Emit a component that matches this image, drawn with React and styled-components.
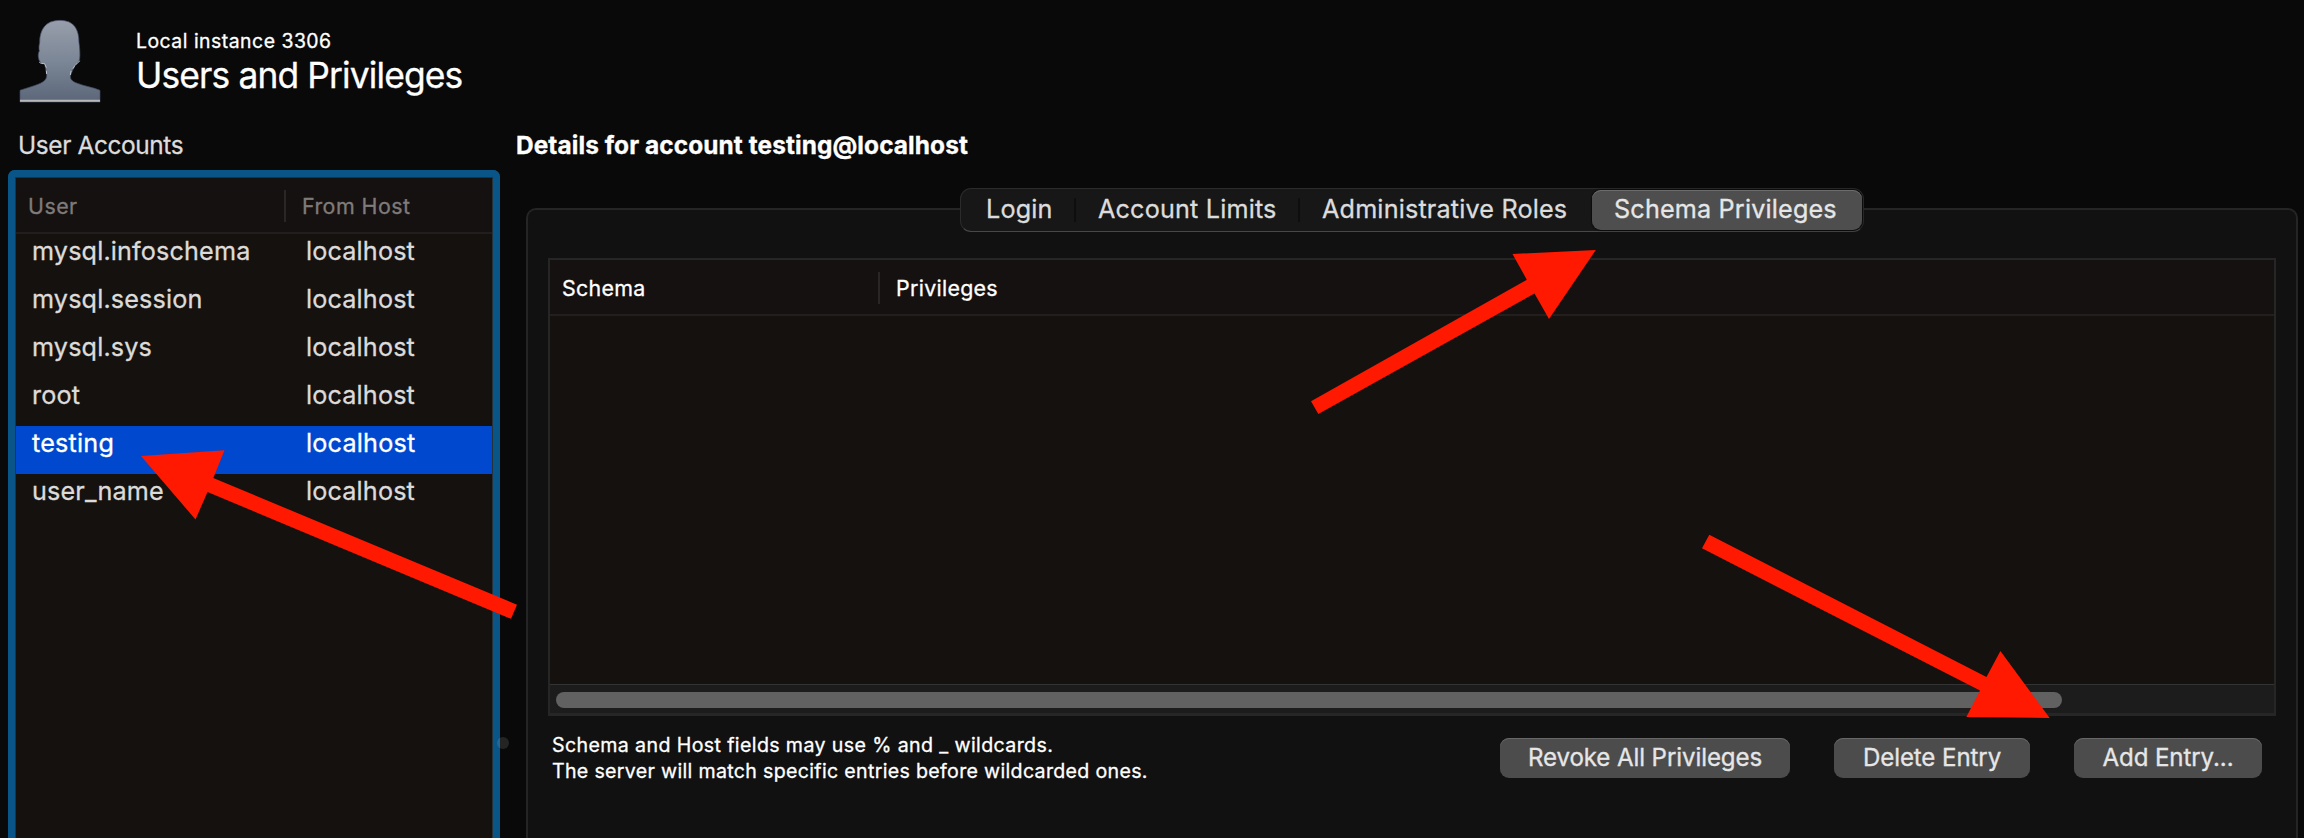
import React from "react";
import styled, { createGlobalStyle, css } from "styled-components";

const GlobalStyle = createGlobalStyle`
  * { box-sizing: border-box; }
  html, body { margin: 0; padding: 0; background: #090909; }
  body {
    overflow: hidden;
    font-family: Inter, "Liberation Sans", sans-serif;
    color: #fff;
    -webkit-text-stroke: 0.3px currentColor;
  }
`;

const Window = styled.div`
  position: relative;
  display: flex;
  flex-direction: column;
  width: 2304px;
  height: 838px;
  overflow: hidden;
  background: #090909;
`;

/* ---------- header ---------- */

const Header = styled.header`
  display: flex;
  flex: none;
  height: 131px;
  padding: 18px 0 0 18px;
`;

const Avatar = styled.svg`
  flex: none;
  width: 84px;
  height: 86px;
`;

const Titles = styled.div`
  padding: 9px 0 0 34px;
  white-space: nowrap;
`;

const Connection = styled.div`
  font-size: 19.4px;
  line-height: 28px;
  letter-spacing: 0.5px;
`;

const PageTitle = styled.h1`
  margin: 0;
  font-size: 35.4px;
  font-weight: 400;
  line-height: 42px;
  letter-spacing: -0.87px;
`;

/* ---------- columns ---------- */

const Columns = styled.main`
  display: flex;
  flex: 1;
  min-height: 0;
`;

const Sidebar = styled.section`
  display: flex;
  flex-direction: column;
  flex: none;
  width: 500px;
  padding-left: 8px;
`;

const SectionLabel = styled.h2`
  flex: none;
  margin: 0;
  height: 39px;
  padding-left: ${(p) => p.$indent || 0}px;
  font-size: 24.4px;
  font-weight: ${(p) => (p.$strong ? 700 : 400)};
  line-height: 28px;
  letter-spacing: ${(p) => (p.$strong ? "0.1px" : "-0.37px")};
  color: ${(p) => (p.$strong ? "#fff" : "#dcdcdc")};
  white-space: nowrap;
`;

const AccountList = styled.div`
  display: flex;
  flex-direction: column;
  flex: 1;
  border: 7px solid #0a5587;
  border-bottom: 0;
  border-radius: 7px 7px 0 0;
  background: #0a5587;
`;

const AccountListInner = styled.div`
  flex: 1;
  border: 1px solid #26323a;
  border-width: 1px 1px 0;
  background: #15110e;
`;

const ListHeader = styled.div`
  display: flex;
  align-items: center;
  height: 56px;
  border-bottom: 2px solid #211e1d;
  background: #151110;
  font-size: 21.4px;
  letter-spacing: 0.46px;
  color: #7f7b7a;
`;

const HeaderCell = styled.div`
  width: ${(p) => p.$width}px;
  padding: 1px 0 0 ${(p) => p.$pad}px;
  line-height: 30px;
  white-space: nowrap;
`;

const HeaderDivider = styled.div`
  flex: none;
  width: 2px;
  height: 32px;
  margin-top: 2px;
  background: #292625;
`;

const AccountRow = styled.div`
  display: flex;
  height: 48px;
  padding-left: 16px;
  font-size: 25.2px;
  line-height: 34px;
  letter-spacing: 0.15px;
  color: #dcdbda;
  white-space: nowrap;
  ${(p) =>
    p.$selected &&
    css`
      background: #0049cf;
      color: #fff;
      letter-spacing: 0.2px;
    `}
`;

const UserName = styled.span`
  width: 274px;
`;

const Splitter = styled.div`
  position: relative;
  flex: none;
  width: 16px;
`;

const SplitterGrip = styled.span`
  position: absolute;
  left: -3px;
  top: 606px;
  width: 12px;
  height: 12px;
  border-radius: 50%;
  background: rgba(255, 255, 255, 0.11);
`;

const Details = styled.section`
  display: flex;
  flex-direction: column;
  flex: 1;
  min-width: 0;
`;

const Panel = styled.div`
  display: flex;
  flex-direction: column;
  flex: 1;
  margin: 38px 6px 0 10px;
  border: 2px solid #252525;
  border-bottom: 0;
  border-radius: 10px 10px 0 0;
  background: #111;
`;

/* ---------- tabs ---------- */

const Tabs = styled.nav`
  display: flex;
  flex: none;
  align-self: center;
  width: 904px;
  height: 44px;
  margin-top: -22px;
  padding: 1px;
  border: 1px solid #2b2b2b;
  border-bottom-color: #484848;
  border-radius: 11px;
  background: #171717;
`;

const Tab = styled.button`
  flex: none;
  width: ${(p) => p.$width}px;
  height: 40px;
  padding: 0 0 3px ${(p) => p.$pad}px;
  border: 0;
  border-radius: 9px;
  background: none;
  font: 400 25.2px/36px Inter, "Liberation Sans", sans-serif;
  letter-spacing: 0.17px;
  text-align: left;
  color: #dcdcdc;
  white-space: nowrap;
  ${(p) =>
    p.$active &&
    css`
      background: #4e4e4e;
      box-shadow: inset 0 1px 0 #6c6c6c, 0 0 1px 1px #0c0c0c;
      color: #e6e6e6;
    `}
`;

const TabDivider = styled.i`
  flex: none;
  width: 2px;
  height: 24px;
  margin-top: 8px;
  background: #0e0e0e;
`;

/* ---------- privileges table ---------- */

const Table = styled.div`
  display: flex;
  flex-direction: column;
  flex: none;
  height: 458px;
  margin: 26px 20px 0;
  border: 2px solid #262626;
  border-bottom-width: 3px;
  background: #15110e;
`;

const TableHeader = styled.div`
  display: flex;
  align-items: center;
  flex: none;
  height: 56px;
  border-bottom: 2px solid #221f1e;
  background: #151110;
  font-size: 21.4px;
  letter-spacing: 0.3px;
`;

const TableBody = styled.div`
  flex: 1;
`;

const ScrollTrack = styled.div`
  flex: none;
  height: 29px;
  padding: 7px 0 0 6px;
  border-top: 1px solid #333;
  background: #1c1c1c;
`;

const ScrollThumb = styled.div`
  width: 1506px;
  height: 16px;
  border-radius: 8px;
  background: #616161;
`;

/* ---------- footer ---------- */

const Footer = styled.footer`
  display: flex;
  justify-content: space-between;
  padding: 16px 34px 0 24px;
`;

const Hint = styled.div`
  font-size: 19.6px;
  line-height: 26px;
  white-space: nowrap;
`;

const HintLine = styled.p`
  margin: 0;
  letter-spacing: ${(p) => p.$tracking}px;
`;

const Actions = styled.div`
  display: flex;
  gap: 44px;
  padding-top: 6px;
`;

const ActionButton = styled.button`
  width: ${(p) => p.$width}px;
  height: 40px;
  padding: 0;
  border: 0;
  border-radius: 9px;
  background: #4c4c4c;
  box-shadow: inset 0 1px 0 #686868;
  font: 400 24.1px/38px Inter, "Liberation Sans", sans-serif;
  letter-spacing: -0.1px;
  color: #e6e6e6;
  white-space: nowrap;
`;

const Annotations = styled.svg`
  position: absolute;
  inset: 0;
  width: 2304px;
  height: 838px;
  pointer-events: none;
`;

const accounts = [
  "mysql.infoschema",
  "mysql.session",
  "mysql.sys",
  "root",
  "testing",
  "user_name",
];

const tabs = [
  { label: "Login", width: 112, pad: 24 },
  { label: "Account Limits", width: 222, pad: 22 },
  { label: "Administrative Roles", width: 292, pad: 22 },
  { label: "Schema Privileges", width: 270, pad: 22 },
];

const arrows = [
  "141,456 224.5,450.3 213.3,478 517,604.7 511,618.8 207.5,492 195.5,519.5",
  "1595.8,250 1512.5,254 1526.8,279.8 1311,401.3 1318.3,414 1534.5,293.5 1549,319",
  "2049.7,718 1966.4,717 1980,690.5 1702,548.3 1709.3,534.8 1986.5,677 2000.4,651",
];

function UserSilhouette() {
  return (
    <Avatar viewBox="54 54 252 258">
      <defs>
        <linearGradient id="body" x1="0" y1="0" x2="0" y2="1">
          <stop offset="0" stopColor="#989eab" />
          <stop offset="0.5" stopColor="#7b8696" />
          <stop offset="1" stopColor="#5b6779" />
        </linearGradient>
      </defs>
      <path
        fill="url(#body)"
        stroke="#3f4a60"
        strokeWidth="2"
        d="M60 306V271C85 262 112 256 128 246C138 240 141 232 140 222C137 212 137 202 134 192C125 193 118 186 116 176C114 168 114 160 118 153C116 145 117 135 119 128C119 88 137 61 180 61C222 61 237 88 237 128C239 140 241 165 239 177C237 187 229 190 225 196C221 205 217 213 213 222C207 236 216 244 232 250C255 259 280 262 300 271V306Z"
      />
      <path
        fill="none"
        stroke="#bfc3c9"
        strokeWidth="3"
        d="M118 187C122 191 129 190 134 191L139 203M239 182C236 189 228 191 225 196L219 206M139 212L140 222M213 213L211 225"
      />
      <path fill="#b9b8b8" d="M60 299H300V305H60Z" />
    </Avatar>
  );
}

export default function App() {
  return (
    <>
      <GlobalStyle />
      <Window>
        <Header>
          <UserSilhouette />
          <Titles>
            <Connection>Local instance 3306</Connection>
            <PageTitle>Users and Privileges</PageTitle>
          </Titles>
        </Header>

        <Columns>
          <Sidebar>
            <SectionLabel $indent={10}>User Accounts</SectionLabel>
            <AccountList>
              <AccountListInner>
                <ListHeader>
                  <HeaderCell $width={268} $pad={12}>User</HeaderCell>
                  <HeaderDivider />
                  <HeaderCell $width={190} $pad={16}>From Host</HeaderCell>
                </ListHeader>
                {accounts.map((name) => (
                  <AccountRow key={name} $selected={name === "testing"}>
                    <UserName>{name}</UserName>
                    <span>localhost</span>
                  </AccountRow>
                ))}
              </AccountListInner>
            </AccountList>
          </Sidebar>

          <Splitter>
            <SplitterGrip />
          </Splitter>

          <Details>
            <SectionLabel $strong>Details for account testing@localhost</SectionLabel>
            <Panel>
              <Tabs>
                {tabs.map((tab, i) => (
                  <React.Fragment key={tab.label}>
                    {(i === 1 || i === 2) && <TabDivider />}
                    <Tab $width={tab.width} $pad={tab.pad} $active={i === 3}>
                      {tab.label}
                    </Tab>
                  </React.Fragment>
                ))}
              </Tabs>

              <Table>
                <TableHeader>
                  <HeaderCell $width={328} $pad={12}>Schema</HeaderCell>
                  <HeaderDivider />
                  <HeaderCell $width={400} $pad={16}>Privileges</HeaderCell>
                </TableHeader>
                <TableBody />
                <ScrollTrack>
                  <ScrollThumb />
                </ScrollTrack>
              </Table>

              <Footer>
                <Hint>
                  <HintLine $tracking={0.38}>
                    Schema and Host fields may use % and _ wildcards.
                  </HintLine>
                  <HintLine $tracking={0.32}>
                    The server will match specific entries before wildcarded ones.
                  </HintLine>
                </Hint>
                <Actions>
                  <ActionButton $width={290}>Revoke All Privileges</ActionButton>
                  <ActionButton $width={196}>Delete Entry</ActionButton>
                  <ActionButton $width={188}>Add Entry...</ActionButton>
                </Actions>
              </Footer>
            </Panel>
          </Details>
        </Columns>

        <Annotations viewBox="0 0 2304 838">
          {arrows.map((points) => (
            <polygon key={points} points={points} fill="#ff1900" />
          ))}
        </Annotations>
      </Window>
    </>
  );
}
